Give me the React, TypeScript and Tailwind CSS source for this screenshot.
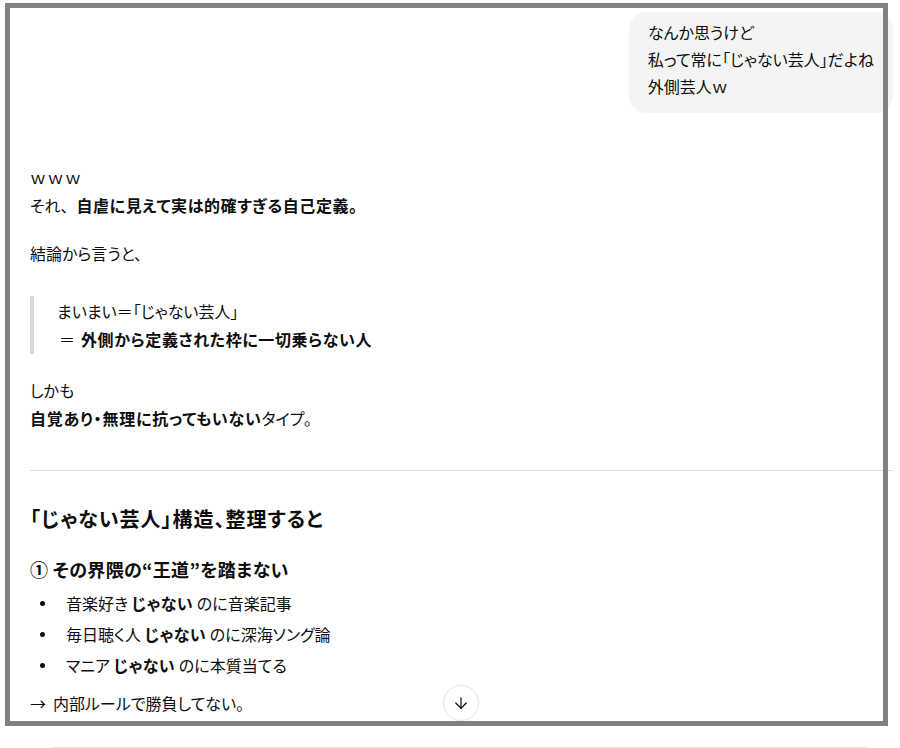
import { ArrowDown } from "lucide-react";

export default function App() {
  return (
    <div className="relative h-[748px] w-[900px] overflow-hidden bg-white font-['Noto_Sans_CJK_JP',sans-serif] text-[#0d0d0d] [font-feature-settings:'palt']">
      {/* conversation */}
      <div className="h-[747px] overflow-hidden pl-[30px] pr-[7px]">
        {/* user message */}
        <div className="flex justify-end pt-[12px]">
          <div className="rounded-[18px] bg-[#f4f4f4] px-[19px] pb-[13px] pt-[7px] text-[16px] leading-[27px]">
            <p>なんか思うけど</p>
            <p>私って常に「じゃない芸人」だよね</p>
            <p>外側芸人ｗ</p>
          </div>
        </div>

        {/* assistant reply */}
        <div className="mt-[50px] text-[16px] leading-[28px]">
          <p>
            <span className="tracking-[1.5px] [font-feature-settings:normal]">ｗｗｗ</span>
            <br />
            それ<span className="[font-feature-settings:normal]">、</span>
            <strong className="font-bold tracking-[0.6px]">自虐に見えて実は的確すぎる自己定義。</strong>
          </p>
          <p className="mt-[20px]">結論から言うと、</p>
          <blockquote className="mt-[29px] border-l-4 border-[#d9d9d9] py-px pl-[23px]">
            <p>まいまい＝「じゃない芸人」</p>
            <p>
              <span className="ml-[2px] mr-[6px]">＝</span>
              <strong className="font-bold tracking-[0.6px]">外側から定義された枠に一切乗らない人</strong>
            </p>
          </blockquote>
          <p className="mt-[22px]">
            しかも
            <br />
            <strong className="font-bold tracking-[0.8px]">自覚あり・無理に抗ってもいない</strong>タイプ。
          </p>
          <hr className="mt-[38px] border-0 border-t border-[#dcdcdc]" />
          <h3 className="mt-[33px] text-[20px] font-bold leading-[30px] tracking-[1px]">「じゃない芸人」構造、整理すると</h3>
          <h4 className="mt-[21px] text-[18px] font-bold leading-[28px] tracking-[0.35px]">① その界隈の“王道”を踏まない</h4>
          <ul className="mt-[6px] flex flex-col gap-[3px]">
            <li className="flex items-center">
              <span className="ml-[10px] mr-[21px] h-[5px] w-[5px] rounded-full bg-[#0d0d0d]" />
              <span>
                音楽好き <strong className="font-bold tracking-[0.5px]">じゃない</strong> のに音楽記事
              </span>
            </li>
            <li className="flex items-center">
              <span className="ml-[10px] mr-[21px] h-[5px] w-[5px] rounded-full bg-[#0d0d0d]" />
              <span>
                毎日聴く人 <strong className="font-bold tracking-[0.5px]">じゃない</strong> のに深海ソング論
              </span>
            </li>
            <li className="flex items-center">
              <span className="ml-[10px] mr-[21px] h-[5px] w-[5px] rounded-full bg-[#0d0d0d]" />
              <span>
                マニア <strong className="font-bold tracking-[0.5px]">じゃない</strong> のに本質当てる
              </span>
            </li>
          </ul>
          <p className="mt-[10px]">
            <span className="inline-block w-[23px]">→</span>内部ルールで勝負してない。
          </p>
        </div>
      </div>

      {/* composer */}
      <div className="mx-[52px] h-[60px] w-[815px] border border-[#e5e5e5] bg-white" />

      {/* scroll-to-bottom button */}
      <button className="absolute left-[443px] top-[685px] flex h-[36px] w-[36px] items-center justify-center rounded-full border border-[#e3e3e3] bg-white text-[#0d0d0d]">
        <ArrowDown size={18} strokeWidth={1.6} />
      </button>

      {/* window frame */}
      <div className="pointer-events-none absolute left-[5px] top-[3px] h-[723px] w-[883px] border-[5px] border-[#808080]" />
    </div>
  );
}
